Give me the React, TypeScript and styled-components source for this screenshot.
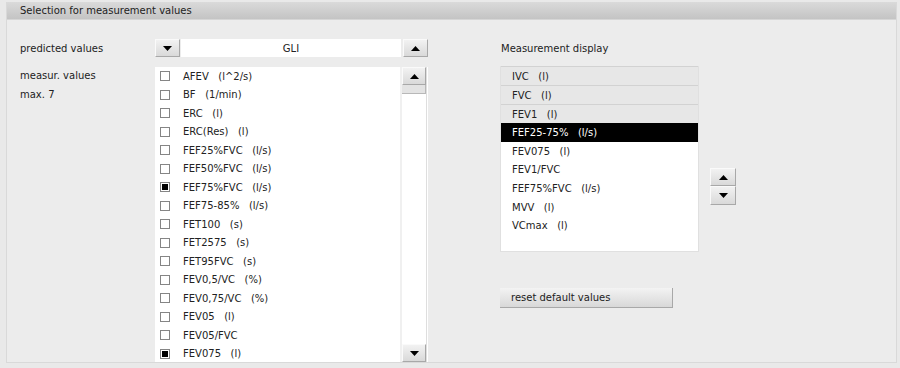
import React from "react";
import styled, { createGlobalStyle } from "styled-components";

const Global = createGlobalStyle`
  html, body { margin: 0; padding: 0; background: #e9e9e9; }
  body { font-family: "DejaVu Sans", Verdana, sans-serif; font-size: 10px; color: #222; }
`;

const Page = styled.div`
  width: 900px;
  height: 368px;
  padding: 2px 0 0 6px;
  box-sizing: border-box;
`;

const Panel = styled.div`
  width: 891px;
  height: 361px;
  box-sizing: border-box;
  background: #ececec;
  border: 1px solid #d9d9d9;
  border-top: none;
  display: flex;
  flex-direction: column;
`;

const Header = styled.div`
  height: 18px;
  box-sizing: border-box;
  background: linear-gradient(#dadada, #c4c4c4);
  border-bottom: 1px solid #d6d6d6;
  padding-left: 13px;
  display: flex;
  align-items: center;
  line-height: 1;
`;

const Body = styled.div`
  flex: 1;
  display: flex;
  padding: 19px 0 0 13px;
  min-height: 0;
`;

const Left = styled.div`
  display: grid;
  grid-template-columns: 135px 273px;
  grid-template-rows: 18px 1fr;
  row-gap: 10px;
`;

const Label = styled.div`
  line-height: 18.5px;
`;

const LabelRow = styled.div`
  display: flex;
  align-items: center;
  height: 18px;
`;

const Combo = styled.div`
  display: flex;
  height: 18px;
  gap: 1px;
`;

const Field = styled.div`
  flex: 1;
  background: #fff;
  display: flex;
  align-items: center;
  justify-content: center;
  margin-right: 1px;
`;

const ArrowBtn = styled.div<{ $w?: number; $h?: number }>`
  width: ${(p) => p.$w ?? 25}px;
  height: ${(p) => p.$h ?? 18}px;
  box-sizing: border-box;
  background: linear-gradient(#f2f2f2, #d9d9d9);
  border-right: 1px solid #a8a8a8;
  border-bottom: 1px solid #a8a8a8;
  border-top: 1px solid #fafafa;
  border-left: 1px solid #fafafa;
  display: flex;
  align-items: center;
  justify-content: center;
  flex-shrink: 0;
`;

const Tri = ({ up }: { up?: boolean }) => (
  <svg width="9" height="5" viewBox="0 0 9 5">
    {up ? <polygon points="0,5 9,5 4.5,0" fill="#000" /> : <polygon points="0,0 9,0 4.5,5" fill="#000" />}
  </svg>
);

const ListBox = styled.div`
  display: flex;
  background: #fff;
  min-height: 0;
`;

const Items = styled.div`
  flex: 1;
  overflow: hidden;
  border-right: 2px solid #f0f0f0;
`;

const Item = styled.div`
  height: 18.5px;
  display: flex;
  align-items: center;
  white-space: pre;
`;

const Box = styled.span<{ $checked?: boolean }>`
  width: 10px;
  height: 10px;
  box-sizing: border-box;
  border: 1px solid #858585;
  background: #fff;
  margin: 0 13px 0 5px;
  display: inline-flex;
  align-items: center;
  justify-content: center;
  &::after {
    content: "";
    width: 6px;
    height: 6px;
    background: ${(p) => (p.$checked ? "#000" : "transparent")};
  }
`;

const ScrollBar = styled.div`
  width: 24px;
  display: flex;
  flex-direction: column;
  border-right: 1px solid #dedede;
  margin-right: 1px;
`;

const Thumb = styled.div`
  height: 9px;
  box-sizing: border-box;
  background: #e3e3e3;
  border-bottom: 1px solid #b8b8b8;
  border-right: 1px solid #b8b8b8;
`;

const Track = styled.div`
  flex: 1;
`;

const Right = styled.div`
  margin-left: 72px;
  display: flex;
  flex-direction: column;
`;

const RightTitle = styled.div`
  height: 18px;
  display: flex;
  align-items: center;
  margin-left: 1px;
`;

const RightMain = styled.div`
  display: flex;
  margin-top: 9px;
  gap: 11px;
`;

const DisplayList = styled.div`
  width: 199px;
  height: 186px;
  box-sizing: border-box;
  background: #fff;
  border: 1px solid #e0e0e0;
  border-top: none;
`;

const DisplayRow = styled.div<{ $kind: "fixed" | "selected" | "normal" }>`
  height: ${(p) => (p.$kind === "normal" ? 18.6 : 19)}px;
  box-sizing: border-box;
  display: flex;
  align-items: center;
  padding-left: 11px;
  white-space: pre;
  background: ${(p) => (p.$kind === "fixed" ? "#e7e7e7" : p.$kind === "selected" ? "#000" : "#fff")};
  color: ${(p) => (p.$kind === "selected" ? "#fff" : "#222")};
  border-top: ${(p) => (p.$kind === "fixed" ? "1px solid #d2d2d2" : "none")};
`;

const MoveButtons = styled.div`
  display: flex;
  flex-direction: column;
  margin-top: 102px;
`;

const ResetBtn = styled.div`
  margin-top: 36px;
  width: 173px;
  height: 20px;
  box-sizing: border-box;
  background: linear-gradient(#f3f3f3, #d8d8d8);
  border-right: 1px solid #a8a8a8;
  border-bottom: 1px solid #a8a8a8;
  display: flex;
  align-items: center;
  padding-left: 11px;
`;

const items: [string, boolean][] = [
  ["AFEV   (l^2/s)", false],
  ["BF   (1/min)", false],
  ["ERC   (l)", false],
  ["ERC(Res)   (l)", false],
  ["FEF25%FVC   (l/s)", false],
  ["FEF50%FVC   (l/s)", false],
  ["FEF75%FVC   (l/s)", true],
  ["FEF75-85%   (l/s)", false],
  ["FET100   (s)", false],
  ["FET2575   (s)", false],
  ["FET95FVC   (s)", false],
  ["FEV0,5/VC   (%)", false],
  ["FEV0,75/VC   (%)", false],
  ["FEV05   (l)", false],
  ["FEV05/FVC", false],
  ["FEV075   (l)", true],
];

const display: [string, "fixed" | "selected" | "normal"][] = [
  ["IVC   (l)", "fixed"],
  ["FVC   (l)", "fixed"],
  ["FEV1   (l)", "fixed"],
  ["FEF25-75%   (l/s)", "selected"],
  ["FEV075   (l)", "normal"],
  ["FEV1/FVC", "normal"],
  ["FEF75%FVC   (l/s)", "normal"],
  ["MVV   (l)", "normal"],
  ["VCmax   (l)", "normal"],
];

export default function App() {
  return (
    <Page>
      <Global />
      <Panel>
        <Header>Selection for measurement values</Header>
        <Body>
          <Left>
            <LabelRow>predicted values</LabelRow>
            <Combo>
              <ArrowBtn><Tri /></ArrowBtn>
              <Field>GLI</Field>
              <ArrowBtn><Tri up /></ArrowBtn>
            </Combo>
            <Label>
              measur. values
              <br />
              max. 7
            </Label>
            <ListBox>
              <Items>
                {items.map(([t, c]) => (
                  <Item key={t}>
                    <Box $checked={c} />
                    {t}
                  </Item>
                ))}
              </Items>
              <ScrollBar>
                <ArrowBtn $w={24}><Tri up /></ArrowBtn>
                <Thumb />
                <Track />
                <ArrowBtn $w={24}><Tri /></ArrowBtn>
              </ScrollBar>
            </ListBox>
          </Left>
          <Right>
            <RightTitle>Measurement display</RightTitle>
            <RightMain>
              <DisplayList>
                {display.map(([t, k]) => (
                  <DisplayRow key={t} $kind={k}>{t}</DisplayRow>
                ))}
              </DisplayList>
              <MoveButtons>
                <ArrowBtn $w={26}><Tri up /></ArrowBtn>
                <ArrowBtn $w={26} $h={19}><Tri /></ArrowBtn>
              </MoveButtons>
            </RightMain>
            <ResetBtn>reset default values</ResetBtn>
          </Right>
        </Body>
      </Panel>
    </Page>
  );
}
